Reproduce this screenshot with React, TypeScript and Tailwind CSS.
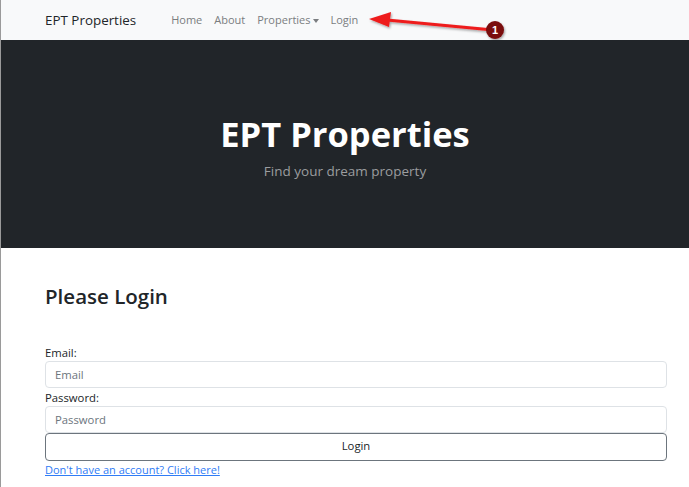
import React from 'react';

const NavBar: React.FC = () => {
  return (
    <nav className="relative h-[40px] bg-[#f8f9fa] flex items-center pl-[44px]">
      <span className="text-[13.4px] text-[#212529] mr-[35px]">EPT Properties</span>
      <div className="flex items-center gap-[12px] text-[11px] text-[#7a7d80]">
        <a className="hover:text-black">Home</a>
        <a className="hover:text-black">About</a>
        <a className="flex items-center gap-[2px]">
          Properties
          <span className="inline-block w-0 h-0 border-l-[3.5px] border-r-[3.5px] border-t-[4px] border-l-transparent border-r-transparent border-t-[#7a7d80] mt-[1px]" />
        </a>
        <a>Login</a>
      </div>

      {/* annotation arrow */}
      <svg className="absolute left-[360px] top-[8px]" width="160" height="32" viewBox="0 0 160 32">
        <defs>
          <filter id="sh" x="-10%" y="-50%" width="120%" height="200%">
            <feDropShadow dx="1" dy="1.5" stdDeviation="1" floodColor="#000" floodOpacity="0.35" />
          </filter>
        </defs>
        <g filter="url(#sh)">
          <line x1="26" y1="12" x2="132" y2="22" stroke="#ee1c1c" strokeWidth="3" />
          <polygon points="8,11 30,4 28,19" fill="#ee1c1c" />
          <circle cx="134" cy="22" r="9" fill="#7a0a0a" />
        </g>
        <text x="134" y="26" textAnchor="middle" fontSize="11" fontWeight="700" fill="#fff" fontFamily="Liberation Sans, sans-serif">1</text>
      </svg>
    </nav>
  );
};

const Hero: React.FC = () => {
  return (
    <header className="h-[208px] bg-[#212529] flex flex-col items-center justify-center">
      <h1 className="text-[34.5px] font-bold text-white leading-none mt-[10px]">EPT Properties</h1>
      <p className="text-[13.5px] text-[#9b9d9f] mt-[10px]">Find your dream property</p>
    </header>
  );
};

const LoginForm: React.FC = () => {
  return (
    <section className="ml-[44px] w-[622px] pt-[38px]">
      <h2 className="text-[20.5px] font-semibold text-[#212529] leading-none">Please Login</h2>
      <form className="mt-[37px] flex flex-col text-[11.3px] text-[#212529]">
        <label className="leading-[17px]">Email:</label>
        <input
          className="h-[27px] border border-[#dee2e6] rounded-[4px] px-[9px] placeholder:text-[#6c757d] outline-none"
          placeholder="Email"
        />
        <label className="leading-[17px] mt-[1px]">Password:</label>
        <input
          className="h-[27px] border border-[#dee2e6] rounded-[4px] px-[9px] placeholder:text-[#6c757d] outline-none"
          placeholder="Password"
          type="password"
        />
        <button type="button" className="h-[28px] border border-[#6c757d] rounded-[4px] bg-white text-[#212529]">
          Login
        </button>
        <a className="text-[11px] text-[#2f7cf6] underline self-start leading-[18px]">Don't have an account? Click here!</a>
      </form>
    </section>
  );
};

export default function App() {
  return (
    <div className="w-[689px] h-[487px] overflow-hidden bg-white border-l border-[#9a9a9a]" style={{ fontFamily: '"Open Sans", "Noto Sans", sans-serif' }}>
      <NavBar />
      <Hero />
      <LoginForm />
    </div>
  );
}
